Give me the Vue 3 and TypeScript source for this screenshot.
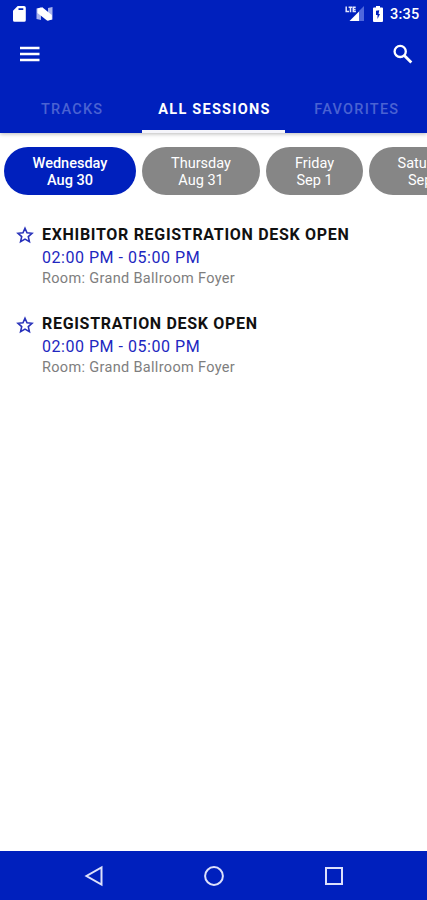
<script setup lang="ts">
import { ref } from 'vue'

interface Day { name: string; date: string; width: number }
interface Session { title: string; time: string; room: string }

const tabs: string[] = ['TRACKS', 'ALL SESSIONS', 'FAVORITES']
const activeTab = ref(1)
const activeDay = ref(0)

const days: Day[] = [
  { name: 'Wednesday', date: 'Aug 30', width: 132 },
  { name: 'Thursday', date: 'Aug 31', width: 118 },
  { name: 'Friday', date: 'Sep 1', width: 97 },
  { name: 'Saturday', date: 'Sep 2', width: 114 },
]

const sessions: Session[] = [
  { title: 'EXHIBITOR REGISTRATION DESK OPEN', time: '02:00 PM - 05:00 PM', room: 'Room: Grand Ballroom Foyer' },
  { title: 'REGISTRATION DESK OPEN', time: '02:00 PM - 05:00 PM', room: 'Room: Grand Ballroom Foyer' },
]
</script>

<template>
  <div class="screen">
    <header class="header">
      <div class="status">
        <svg class="sd" width="13" height="16" viewBox="0 0 13 16">
          <path fill="#fff" fill-rule="evenodd" d="M4.7 0H11a1.8 1.8 0 0 1 1.8 1.8v12.4A1.6 1.6 0 0 1 11.200 15.800H1.600A1.600 1.600 0 0 1 0 14.200V4.800ZM5.500 2.300V3.900H10.300V2.300Z" />
        </svg>
        <svg class="nougat" width="17" height="14" viewBox="0 0 17 14">
          <path fill="#a9b4ef" d="M.5 1.500 5 .500V13L.500 12ZM12 1l4.500-1v12.500L12 13.500Z" />
          <path fill="#fff" d="M1.500 1.500 6.300 .300 15.800 8V12.500L11.300 13.700 1.500 6Z" />
        </svg>
        <span class="grow"></span>
        <svg class="signal" width="20" height="16" viewBox="0 0 20 16">
          <path fill="#4f68dc" d="M14 5 19 0V15H14Z" />
          <path fill="#fff" d="M4.500 15 14 5.500V15Z" />
          <path fill="none" stroke="#e3e7fc" stroke-width="1.500" d="M1.200 .500V5.600H4M3.600 1.200H7.200M5.500 1V6.200M10.700 1.200H8.300V5.600H10.900M8.300 3.400H10.600" />
        </svg>
        <svg class="battery" width="10" height="16" viewBox="0 0 10 16">
          <path fill="#fff" d="M3 0H7V1.500H9Q10 1.500 10 2.500V15Q10 16 9 16H1Q0 16 0 15V2.500Q0 1.500 1 1.500H3Z" />
          <path fill="#0020bd" d="M6.200 4.300 3 4.800V9H4.500V13L7 8H5.600Z" />
        </svg>
        <span class="clock">3:35</span>
      </div>

      <div class="toolbar">
        <svg width="20" height="16" viewBox="0 0 20 16">
          <path stroke="#fff" stroke-width="2.400" d="M0 2H19.500M0 8H19.500M0 14H19.500" />
        </svg>
        <svg width="20" height="20" viewBox="0 0 20 20">
          <circle cx="7.200" cy="7.400" r="5.600" fill="none" stroke="#fff" stroke-width="2.300" />
          <path stroke="#fff" stroke-width="2.800" d="M11.300 11.500 18.300 18.500" />
        </svg>
      </div>

      <nav class="tabs">
        <button v-for="(tab, i) in tabs" :key="tab" class="tab" :class="{ active: i === activeTab }" @click="activeTab = i">
          {{ tab }}
        </button>
      </nav>
    </header>

    <div class="days">
      <button
        v-for="(day, i) in days"
        :key="day.name"
        class="day"
        :class="{ active: i === activeDay }"
        :style="{ width: day.width + 'px' }"
        @click="activeDay = i"
      >
        <span>{{ day.name }}</span>
        <span>{{ day.date }}</span>
      </button>
    </div>

    <main class="sessions">
      <article v-for="s in sessions" :key="s.title" class="session">
        <svg class="star" width="18" height="18" viewBox="0 0 18 18">
          <path fill="none" stroke="#2831ba" stroke-width="1.600" stroke-linejoin="miter" d="M9 2.300 11 6.800 16 7.300 12.300 10.600 13.400 15.700 9 13.100 4.600 15.700 5.700 10.600 2 7.300 7 6.800Z" />
        </svg>
        <div class="info">
          <h2 class="title">{{ s.title }}</h2>
          <p class="time">{{ s.time }}</p>
          <p class="room">{{ s.room }}</p>
        </div>
      </article>
    </main>

    <footer class="navbar">
      <svg width="20" height="22" viewBox="0 0 20 22">
        <path fill="none" stroke="#dce0fb" stroke-width="2" d="M17.500 2.500V19.500L2.500 11Z" />
      </svg>
      <svg width="20" height="22" viewBox="0 0 20 22">
        <circle cx="10" cy="11" r="8.900" fill="none" stroke="#dce0fb" stroke-width="2" />
      </svg>
      <svg width="20" height="22" viewBox="0 0 20 22">
        <rect x="2" y="3" width="16" height="16" fill="none" stroke="#dce0fb" stroke-width="2" />
      </svg>
    </footer>
  </div>
</template>

<style>
body { overflow: hidden; background: #fff; }
</style>

<style scoped>
.screen {
  display: flex;
  flex-direction: column;
  width: 427px;
  height: 900px;
  overflow: hidden;
  background: #fff;
  font-family: Roboto, "Liberation Sans", sans-serif;
}
svg { display: block; flex: none; }
button { border: 0; padding: 0; margin: 0; background: none; font: inherit; }
.header {
  flex: none;
  height: 133px;
  background: #0020bd;
  box-shadow: 0 1px 4px rgba(0, 0, 0, 0.28);
}
.status {
  display: flex;
  align-items: center;
  height: 27px;
  padding: 0 8px 0 13px;
}
.nougat { margin-left: 10px; }
.grow { flex: 1; }
.signal { margin-right: 8px; }
.battery { margin-right: 7px; }
.clock {
  width: 29px;
  padding-top: 1px;
  color: #fff;
  font-size: 14.5px;
  font-weight: 500;
  letter-spacing: 0.2px;
  white-space: nowrap;
}
.toolbar {
  display: flex;
  justify-content: space-between;
  align-items: center;
  height: 54px;
  padding: 0 14px 0 20px;
}
.tabs {
  display: grid;
  grid-template-columns: repeat(3, 1fr);
  height: 52px;
}
.tab {
  height: 52px;
  padding: 7px 0 0 2px;
  border-bottom: 3px solid transparent;
  color: #4a62d2;
  font-size: 14.5px;
  font-weight: 500;
  letter-spacing: 1.25px;
  white-space: nowrap;
}
.tab.active { color: #fff; font-weight: 700; border-bottom-color: #f5f5fa; }
.days {
  display: flex;
  flex: none;
  gap: 6px;
  padding: 13.5px 0 0 4px;
}
.day {
  display: flex;
  flex: none;
  flex-direction: column;
  align-items: center;
  justify-content: center;
  height: 48px;
  padding-top: 2.5px;
  box-sizing: border-box;
  border-radius: 24px;
  background: #868686;
  color: #fff;
  font-size: 14.5px;
  line-height: 17px;
}
.day.active { background: #0020bd; font-weight: 500; }
.sessions {
  display: flex;
  flex: 1;
  flex-direction: column;
  gap: 23.6px;
  padding: 29.4px 16px 0;
}
.session { display: flex; gap: 8px; height: 66px; }
.star { margin-top: 2.2px; }
.title, .time, .room { margin: 0; font-weight: 400; white-space: nowrap; }
.title {
  color: #111;
  font-size: 16px;
  line-height: 22.7px;
  font-weight: 700;
  letter-spacing: 0.69px;
}
.time { color: #2127c0; font-size: 16px; line-height: 22px; letter-spacing: 0.53px; }
.room { color: #7e7e7e; font-size: 14.5px; line-height: 20px; letter-spacing: 0.33px; }
.navbar {
  display: flex;
  flex: none;
  justify-content: space-between;
  align-items: center;
  height: 49px;
  padding: 0 83px 0 84px;
  box-sizing: border-box;
  background: #0020bd;
}
</style>
